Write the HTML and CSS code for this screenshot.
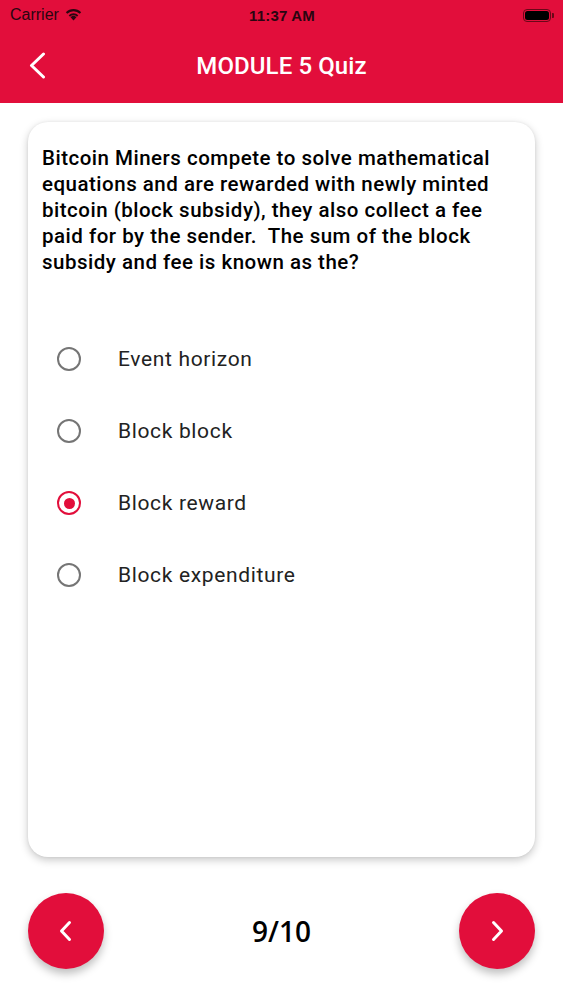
FILE: index.html
```html
<!DOCTYPE html>
<html>
<head>
<meta charset="utf-8">
<link rel="stylesheet" href="styles.css">
</head>
<body>
<div class="app">
  <header class="topbar">
    <div class="status">
      <div class="status-left">
        <span class="carrier">Carrier</span>
        <svg class="wifi" width="17" height="13" viewBox="0 0 18 13">
          <path d="M9 12.8 L5.9 9.3 A4.4 4.4 0 0 1 12.1 9.3 Z" fill="#2a0510"/>
          <path d="M3.9 7.2 A7.3 7.3 0 0 1 14.1 7.2 L12.7 8.8 A5.2 5.2 0 0 0 5.3 8.8 Z" fill="#2a0510"/>
          <path d="M0.9 4.1 A11.5 11.5 0 0 1 17.1 4.1 L15.6 5.8 A9.2 9.2 0 0 0 2.4 5.8 Z" fill="#2a0510"/>
        </svg>
      </div>
      <span class="time">11:37 AM</span>
      <div class="status-right">
        <div class="battery"><div class="battery-fill"></div></div>
        <div class="battery-nub"></div>
      </div>
    </div>
    <div class="navbar">
      <svg class="back" width="17" height="27" viewBox="0 0 17 27">
        <path d="M14.5 2 L2.5 13.5 L14.5 25" fill="none" stroke="#fff" stroke-width="3" stroke-linecap="round" stroke-linejoin="round"/>
      </svg>
      <h1 class="title">MODULE 5 Quiz</h1>
    </div>
  </header>

  <main class="content">
    <section class="card">
      <p class="question">Bitcoin Miners compete to solve mathematical equations and are rewarded with newly minted bitcoin (block subsidy), they also collect a fee paid for by the sender.&nbsp; The sum of the block subsidy and fee is known as the?</p>
      <ul class="options">
        <li class="option"><span class="radio"></span><span class="label">Event horizon</span></li>
        <li class="option"><span class="radio"></span><span class="label">Block block</span></li>
        <li class="option"><span class="radio checked"></span><span class="label">Block reward</span></li>
        <li class="option"><span class="radio"></span><span class="label">Block expenditure</span></li>
      </ul>
    </section>

    <nav class="pager">
      <button class="fab">
        <svg width="16" height="26" viewBox="0 0 16 26"><path d="M11.5 4.5 L3.5 13 L11.5 21.5" fill="none" stroke="#fff" stroke-width="3" stroke-linecap="round" stroke-linejoin="round"/></svg>
      </button>
      <span class="count">9/10</span>
      <button class="fab">
        <svg width="16" height="26" viewBox="0 0 16 26"><path d="M4.5 4.5 L12.5 13 L4.5 21.5" fill="none" stroke="#fff" stroke-width="3" stroke-linecap="round" stroke-linejoin="round"/></svg>
      </button>
    </nav>
  </main>
</div>
</body>
</html>
```

FILE: styles.css
```css
* { box-sizing: border-box; }
html, body { margin: 0; padding: 0; background: #fff; }
body { font-family: Roboto, "Liberation Sans", sans-serif; width: 563px; height: 1000px; overflow: hidden; }

.app { display: flex; flex-direction: column; height: 1000px; }

.topbar { background: #e20e3b; height: 103px; display: flex; flex-direction: column; }

.status { height: 30px; display: flex; align-items: center; justify-content: space-between; padding: 0 9px 0 10px; }
.status-left { display: flex; align-items: center; gap: 6px; width: 120px; }
.carrier { font-family: "Liberation Sans", Arial, sans-serif; font-size: 16px; color: #2a0510; }
.wifi { margin-top: -2px; }
.time { font-family: "Liberation Sans", Arial, sans-serif; font-size: 15px; font-weight: 700; color: #2a0510; letter-spacing: 0.2px; }
.status-right { display: flex; align-items: center; justify-content: flex-end; width: 120px; gap: 1px; }
.battery { width: 28px; height: 13px; border: 1px solid #6a0718; border-radius: 4px; padding: 1px; }
.battery-fill { width: 100%; height: 100%; background: #000; border-radius: 2.5px; }
.battery-nub { width: 2px; height: 5px; background: #6a0718; border-radius: 0 1px 1px 0; }

.navbar { flex: 1; display: flex; align-items: center; justify-content: center; position: relative; padding-bottom: 2px; }
.back { position: absolute; left: 29px; top: 22px; }
.title { margin: 0; color: #fff; font-size: 24px; font-weight: 500; letter-spacing: 0.1px; }

.content { flex: 1; display: flex; flex-direction: column; padding: 19px 28px 0; }

.card { height: 735px; background: #fff; border-radius: 20px; box-shadow: 0 3px 8px rgba(0,0,0,0.22), 0 0 3px rgba(0,0,0,0.06); padding: 23px 14px 0; }

.question { margin: 0; font-size: 20.5px; line-height: 26px; font-weight: 500; color: #000; letter-spacing: 0.5px; }

.options { list-style: none; margin: 48px 0 0; padding: 0; }
.option { height: 72px; display: flex; align-items: center; }
.radio { width: 24px; height: 24px; border: 2.5px solid #757575; border-radius: 50%; margin-left: 15px; flex: none; display: flex; align-items: center; justify-content: center; }
.radio.checked { border-color: #e20e3b; }
.radio.checked::after { content: ""; width: 11px; height: 11px; border-radius: 50%; background: #e20e3b; }
.label { margin-left: 37px; font-size: 21px; color: #222; letter-spacing: 0.65px; }

.pager { display: flex; align-items: center; justify-content: space-between; margin-top: 36px; }
.fab { width: 76px; height: 76px; border-radius: 50%; border: none; background: #e20e3b; display: flex; align-items: center; justify-content: center; box-shadow: 0 5px 8px rgba(0,0,0,0.25); padding: 0; }
.count { font-family: "Open Sans", "Noto Sans", sans-serif; font-size: 28px; font-weight: 600; color: #000; }
```
